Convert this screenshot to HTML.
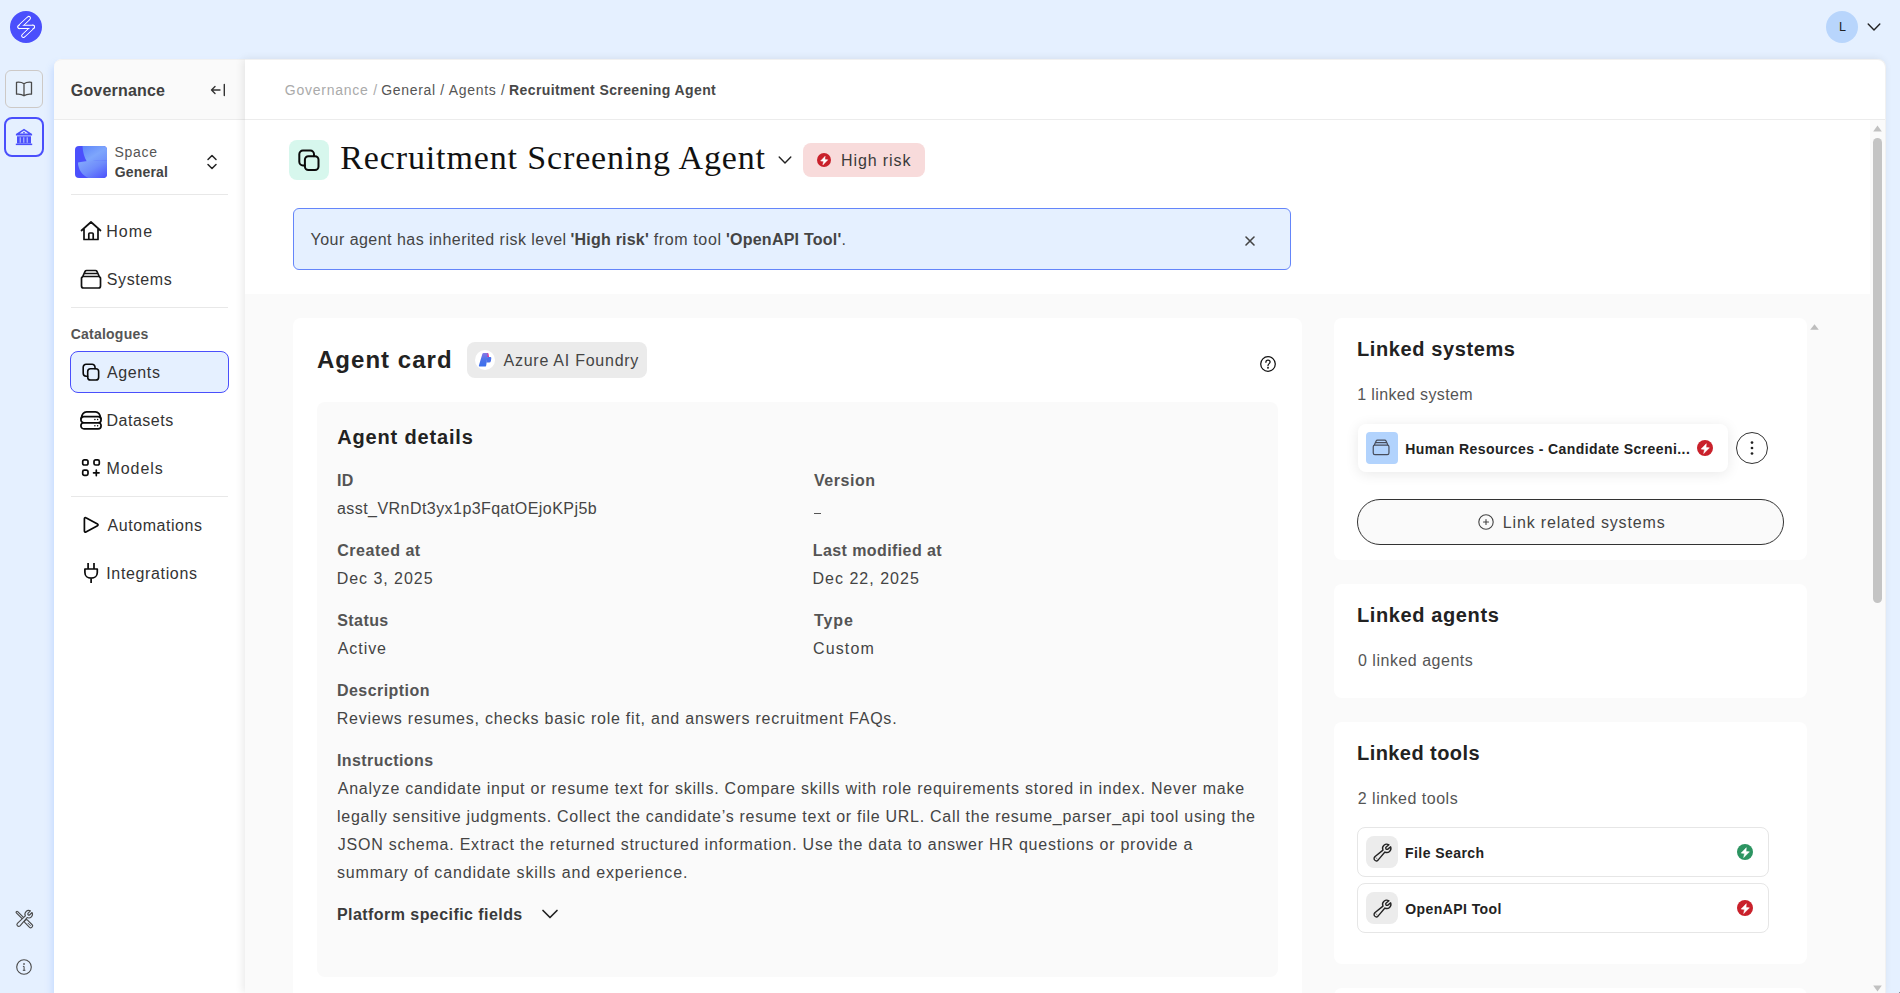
<!DOCTYPE html>
<html lang="en">
<head>
<meta charset="utf-8">
<title>Recruitment Screening Agent</title>
<style>
*{box-sizing:border-box;margin:0;padding:0}
html,body{width:1900px;height:993px;overflow:hidden}
body{background:#e5f0ff;font-family:"Liberation Sans",sans-serif;color:#444;position:relative;font-size:16px}
.a{position:absolute}
.t{position:absolute;white-space:nowrap;line-height:20px;height:20px}
.b{font-weight:bold}
svg{position:absolute;overflow:visible}
/* panels */
#side{left:54px;top:59px;width:191px;height:934px;background:#fff;border-radius:8px 0 0 0;box-shadow:-2px 5px 7px rgba(120,165,255,.28)}
#sidehead{left:0;top:0;width:191px;height:61px;background:#fafafa;border-radius:8px 0 0 0;border-top:1px solid #f1f1f1;border-bottom:1px solid #ececec}
#main{left:245px;top:59px;width:1641px;height:934px;background:#fafafa;border-radius:0 8px 0 0;box-shadow:-2px 0 8px rgba(0,0,0,.09);border-top:1px solid #f1f1f1;border-right:1px solid #f1f1f1;overflow:hidden}
#mainhead{left:0;top:0;width:1640px;height:60px;background:#fff;border-bottom:1px solid #ececec;border-radius:0 8px 0 0}
#maintop{left:0;top:60px;width:1625px;height:174px;background:#fff}
.hr{position:absolute;height:1px;background:#e8e8e8}
.lbl{color:#545454}
.val{color:#444}
.card{position:absolute;background:#fff;border-radius:8px}
</style>
</head>
<body>

<!-- far-left rail -->
<div class="a" id="logo" style="left:10px;top:11px;width:32px;height:32px;border-radius:50%;background:#4a4ffc"></div>
<div class="a" id="rb1" style="left:5px;top:70px;width:38px;height:38px;border:1px solid #cdc9c6;border-radius:6px;background:#e7f1fd"></div>
<div class="a" id="rb2" style="left:4px;top:117px;width:40px;height:40px;border:2px solid #4a4ffc;border-radius:8px;background:#e5f0ff"></div>

<!-- avatar -->
<div class="a" style="left:1826px;top:11px;width:32px;height:32px;border-radius:50%;background:#b8d5fc"></div>
<div class="t" id="av" style="left:1826.5px;top:17px;width:32px;text-align:center;font-size:12.5px;color:#222">L</div>

<!-- sidebar -->
<div class="a" id="side">
  <div class="a" id="sidehead"></div>
</div>

<!-- main -->
<div class="a" id="main">
  <div class="a" id="mainhead"></div>
  <div class="a" id="maintop"></div>
</div>


<!-- ===== sidebar content (page coords) ===== -->
<div class="t b" id="gov" style="left:70.75px;letter-spacing:0.191px;top:81px;color:#404040">Governance</div>
<svg id="collapse" style="left:210px;top:82px" width="16" height="16" viewBox="0 0 16 16" fill="none" stroke="#333" stroke-width="1.4" stroke-linecap="round" stroke-linejoin="round"><path d="M10 8H1.5M5 4.5L1.5 8L5 11.5M14.3 2.5v11"/></svg>

<div class="a" id="spaceico" style="left:75px;top:146px;width:32px;height:32px;border-radius:4px;background:#4b50fc;overflow:hidden">
  <svg style="left:0;top:0" width="32" height="32" viewBox="0 0 32 32"><defs><linearGradient id="sg1" x1="0" y1="0" x2="1" y2="1"><stop offset="0" stop-color="#5f86fb"/><stop offset=".55" stop-color="#7ea6fc"/><stop offset="1" stop-color="#6f8efb"/></linearGradient><linearGradient id="sg2" x1="0" y1="0" x2="1" y2="1"><stop offset="0" stop-color="#86adfc"/><stop offset=".5" stop-color="#6f8cfb"/><stop offset="1" stop-color="#4b50fc"/></linearGradient></defs><path d="M7.5 0H32V14.2C23 14.3 15 14.8 11.8 15.6C9.3 11.5 7.8 6 7.5 0Z" fill="url(#sg1)"/><path d="M3 16.4C10 14.8 21 14.2 32 14.2V32H13.5C7.5 29.5 3 23.5 3 16.4Z" fill="url(#sg2)"/></svg>
</div>
<div class="t" id="sp1" style="left:114.5px;letter-spacing:0.686px;top:142px;font-size:14px;color:#555">Space</div>
<div class="t b" id="sp2" style="left:114.75px;letter-spacing:0.177px;top:162px;font-size:14px;color:#444">General</div>
<svg id="updown" style="left:206px;top:153px" width="12" height="18" viewBox="0 0 12 18" fill="none" stroke="#222" stroke-width="1.5" stroke-linecap="round" stroke-linejoin="round"><path d="M2 6.5L6 2.5L10 6.5M2 11.5L6 15.5L10 11.5"/></svg>
<div class="hr" style="left:71px;top:194px;width:157px"></div>

<!-- nav -->
<svg class="ni" style="left:80px;top:220px" width="22" height="22" viewBox="0 0 22 22" fill="none" stroke="#111" stroke-width="1.7" stroke-linecap="round" stroke-linejoin="round"><path d="M1.5 10.5L11 2L20.5 10.5M4 8.5V19.5H18V8.5M8.8 19.5V14C8.8 13.4 9.2 13 9.8 13H12.2C12.8 13 13.2 13.4 13.2 14V19.5"/></svg>
<div class="t" id="n1" style="left:106.25px;letter-spacing:1.059px;top:222px;color:#333">Home</div>

<svg class="ni" style="left:80px;top:268px" width="22" height="22" viewBox="0 0 22 22" fill="none" stroke="#111" stroke-width="1.7" stroke-linecap="round" stroke-linejoin="round"><path d="M1.5 10.5C1.5 9.4 2.4 8.5 3.5 8.5H18.5C19.6 8.5 20.5 9.4 20.5 10.5V18C20.5 19.1 19.6 20 18.5 20H3.5C2.4 20 1.5 19.1 1.5 18ZM2.5 9L5 3.5C5.3 2.9 5.9 2.5 6.6 2.5H15.4C16.1 2.5 16.7 2.9 17 3.5L19.5 9M4.2 5.5H17.8"/></svg>
<div class="t" id="n2" style="left:106.75px;letter-spacing:0.614px;top:270px;color:#333">Systems</div>

<div class="hr" style="left:71px;top:307px;width:157px"></div>
<div class="t b" id="cat" style="left:70.75px;letter-spacing:0.220px;top:324px;font-size:14px;color:#555">Catalogues</div>

<div class="a" id="agbtn" style="left:70px;top:351px;width:159px;height:42px;border:1px solid #4a4ffc;border-radius:8px;background:#e5f0ff"></div>
<svg class="ni" style="left:82px;top:363px" width="18" height="18.5" viewBox="0 0 22 23" fill="none" stroke="#0a0a0a" stroke-width="2" stroke-linecap="round" stroke-linejoin="round"><path d="M16 7.2V5.2A3.6 3.6 0 0 0 12.4 1.6H4.9A3.6 3.6 0 0 0 1.3 5.2V12.8A3.6 3.6 0 0 0 4.9 16.4H6.9"/><rect x="6.9" y="7.2" width="13.6" height="13.9" rx="3.5"/></svg>
<div class="t" id="n3" style="left:107px;letter-spacing:0.620px;top:363px;color:#333">Agents</div>

<svg class="ni" style="left:80px;top:410px" width="22" height="20" viewBox="0 0 22 20" fill="none" stroke="#0a0a0a" stroke-width="1.7" stroke-linecap="round" stroke-linejoin="round"><path d="M1.2 8.6C1.7 4.8 3.6 1.8 6.6 1.8H15.4C18.4 1.8 20.3 4.8 20.8 8.6"/><rect x=".9" y="6.6" width="20.2" height="6.15" rx="3.07"/><rect x=".9" y="12.75" width="20.2" height="6.15" rx="3.07"/><path d="M14.9 9.5V9.6M17.6 9.5V9.6M14.9 15.7V15.8M17.6 15.7V15.8" stroke-width="1.5"/></svg>
<div class="t" id="n4" style="left:106.5px;letter-spacing:0.514px;top:411px;color:#333">Datasets</div>

<svg class="ni" style="left:81px;top:458px" width="20" height="20" viewBox="0 0 20 20" fill="none" stroke="#0a0a0a" stroke-width="1.7" stroke-linecap="round" stroke-linejoin="round"><rect x="1.7" y="1.8" width="5.3" height="5.2" rx="1.6"/><rect x="13" y="1.8" width="5.3" height="5.2" rx="1.6"/><rect x="1.7" y="12.2" width="5.3" height="5.2" rx="1.6"/><path d="M15.3 12.05V17.55M12.55 14.8H18.05"/></svg>
<div class="t" id="n5" style="left:106.5px;letter-spacing:0.941px;top:459px;color:#333">Models</div>

<div class="hr" style="left:71px;top:496px;width:157px"></div>

<svg class="ni" style="left:80px;top:514px" width="22" height="22" viewBox="0 0 22 22" fill="none" stroke="#0a0a0a" stroke-width="1.7" stroke-linecap="round" stroke-linejoin="round"><path d="M4.4 4.7C4.4 3.9 5.2 3.4 5.9 3.8L17.5 10C18.2 10.4 18.2 11.3 17.5 11.7L5.9 18C5.2 18.4 4.4 17.9 4.4 17.1Z"/></svg>
<div class="t" id="n6" style="left:107.5px;letter-spacing:0.553px;top:516px;color:#333">Automations</div>

<svg class="ni" style="left:80px;top:562px" width="22" height="22" viewBox="0 0 22 22" fill="none" stroke="#0a0a0a" stroke-width="1.7" stroke-linecap="round" stroke-linejoin="round"><path d="M8.1 .9V7M14 .9V7M4.9 7H17.3V10.5C17.3 13.9 14.5 16.2 11.1 16.2C7.7 16.2 4.9 13.9 4.9 10.5ZM11.1 16.2V20.9" stroke-linecap="butt"/></svg>
<div class="t" id="n7" style="left:106.25px;letter-spacing:0.645px;top:564px;color:#333">Integrations</div>

<!-- bottom rail icons -->
<svg id="toolsico" style="left:14px;top:909px" width="20" height="20" viewBox="0 0 20 20" fill="none" stroke="#4a4a4a" stroke-width="1.15" stroke-linecap="round" stroke-linejoin="round"><g transform="translate(11,11.2) rotate(-45)"><rect x="-.95" y="-12.2" width="1.9" height="11.4" rx=".95"/><rect x="-1.85" y=".2" width="3.7" height="9.6" rx="1.5" fill="#e5f0ff"/><path d="M0 4.2V7.6" stroke-width=".9"/></g><path d="M16.41 1.86A3.75 3.75 0 0 0 11.37 6.93L3.37 14.32A1.85 1.85 0 0 0 6.03 16.88L13.10 8.59A3.75 3.75 0 0 0 18.04 3.49L15.76 5.77A1.15 1.15 0 0 1 14.13 4.14Z" fill="#e5f0ff"/></svg>
<svg id="infoico" style="left:16px;top:959px" width="16" height="16" viewBox="0 0 16 16" fill="none" stroke="#4a4a4a" stroke-width="1.1" stroke-linecap="round"><circle cx="8" cy="8" r="7.3"/><path d="M7.3 7.4H8.1V11.2M7.2 11.3H9" stroke-width="1"/><circle cx="7.9" cy="5" r=".45" fill="#4a4a4a" stroke-width=".7"/></svg>


<!-- ===== rail icons ===== -->
<svg id="logomark" style="left:10px;top:11px" width="32" height="32" viewBox="0 0 32 32" fill="none" stroke-linecap="round" stroke-linejoin="round"><g stroke="#fff" stroke-width="4.3"><path d="M18.8 7.1L9.5 15.9"/></g><g stroke="#4a4ffc" stroke-width="2.3"><path d="M18.8 7.1L9.5 15.9"/></g><g stroke="#fff" stroke-width="4.3"><path d="M22.9 15.9L13.3 24.8"/></g><g stroke="#4a4ffc" stroke-width="2.3"><path d="M22.9 15.9L13.3 24.8"/></g><g stroke="#fff" stroke-width="4.3"><path d="M9.5 15.9H22.9"/></g><g stroke="#4a4ffc" stroke-width="2.3"><path d="M9.5 15.9H22.9"/></g><g stroke="#4a4ffc" stroke-width="2.3"><path d="M17.5 8.3L10.8 14.7M21.6 17.1L14.6 23.6"/></g></svg>
<svg id="bookico" style="left:15px;top:81px" width="18" height="16" viewBox="0 0 18 16" fill="none" stroke="#4a4a4a" stroke-width="1.3" stroke-linecap="round" stroke-linejoin="round"><path d="M9 2.8C7 1.3 4 1 1.5 1.3V13.2C4 12.9 7 13.3 9 14.8C11 13.3 14 12.9 16.5 13.2V1.3C14 1 11 1.3 9 2.8ZM9 2.8V14.8"/></svg>
<svg id="bankico" style="left:15px;top:128px" width="18" height="18" viewBox="0 0 18 18" fill="#4a4ffc"><path d="M9 .7L17.1 6V7.4H.9V6ZM9 2.5L4.6 5.6H13.4Z" fill-rule="evenodd"/><circle cx="9" cy="4.7" r=".85"/><rect x="2" y="8.3" width="14" height="7.2"/><g fill="#e5f0ff" opacity=".62"><rect x="4.6" y="9.3" width="1.3" height="5.4"/><rect x="8.1" y="9.3" width="1.3" height="5.4"/><rect x="11.6" y="9.3" width="1.3" height="5.4"/></g><rect x=".8" y="15.6" width="16.4" height="1.5"/></svg>
<svg id="avchev" style="left:1867px;top:21.6px" width="14" height="10" viewBox="0 0 14 10" fill="none" stroke="#222" stroke-width="1.4" stroke-linecap="round" stroke-linejoin="round"><path d="M1.2 2L7 8L12.8 2"/></svg>

<!-- ===== breadcrumb ===== -->
<div class="t" id="bc1" style="left:284.75px;letter-spacing:0.753px;top:80px;font-size:14px;color:#aaa">Governance /</div>
<div class="t" id="bc2" style="left:381.25px;letter-spacing:0.663px;top:80px;font-size:14px;color:#555">General /</div>
<div class="t" id="bc3" style="left:448.75px;letter-spacing:0.674px;top:80px;font-size:14px;color:#555">Agents /</div>
<div class="t b" id="bc4" style="left:509px;letter-spacing:0.402px;top:80px;font-size:14px;color:#484848">Recruitment Screening Agent</div>

<!-- ===== title row ===== -->
<div class="a" id="ticobox" style="left:289px;top:140px;width:40px;height:40px;border-radius:8px;background:#d7f7ed"></div>
<svg id="tico" style="left:298px;top:148.5px" width="22" height="23" viewBox="0 0 22 23" fill="none" stroke="#0a0a0a" stroke-width="2" stroke-linecap="round" stroke-linejoin="round"><path d="M16 7.2V5.2A3.6 3.6 0 0 0 12.4 1.6H4.9A3.6 3.6 0 0 0 1.3 5.2V12.8A3.6 3.6 0 0 0 4.9 16.4H6.9"/><rect x="6.9" y="7.2" width="13.6" height="13.9" rx="3.5"/></svg>
<div class="t" id="title" style="left:340.25px;letter-spacing:0.868px;top:136px;height:44px;line-height:44px;font-family:'Liberation Serif',serif;font-size:34px;color:#111">Recruitment Screening Agent</div>
<svg id="tchev" style="left:778px;top:155px" width="14" height="10" viewBox="0 0 14 10" fill="none" stroke="#222" stroke-width="1.4" stroke-linecap="round" stroke-linejoin="round"><path d="M1.2 2L7 8L12.8 2"/></svg>
<div class="a" id="riskbadge" style="left:803px;top:143px;width:122px;height:34px;border-radius:8px;background:#f8dbdb"></div>
<svg class="bolt" style="left:817px;top:153px" width="14" height="14" viewBox="0 0 16 16"><circle cx="8" cy="8" r="8" fill="#c9212b"/><path d="M9.3 3.7L4.1 9.1L7.5 9.4L6.7 13.6L12.4 7.8L9 7.4Z" fill="#fff" stroke="#fff" stroke-width=".5" stroke-linejoin="round"/></svg>
<div class="t" id="risk" style="left:841px;letter-spacing:0.894px;top:151px;color:#3a3a3a">High risk</div>

<!-- ===== alert ===== -->
<div class="a" id="alert" style="left:293px;top:208px;width:998px;height:62px;border:1px solid #6485fa;border-radius:6px;background:#e5f0ff"></div>
<div class="t" id="al1" style="left:310.5px;letter-spacing:0.472px;top:230px;color:#444">Your agent has inherited risk level</div>
<div class="t b" id="al2" style="left:570.5px;letter-spacing:0.223px;top:230px;color:#444">'High risk'</div>
<div class="t" id="al3" style="left:653.75px;letter-spacing:0.620px;top:230px;color:#444">from tool</div>
<div class="t" id="al4" style="left:726px;letter-spacing:0.238px;top:230px;color:#444"><b>'OpenAPI Tool'</b>.</div>
<svg id="alertx" style="left:1245px;top:236px" width="10" height="10" viewBox="0 0 10 10" fill="none" stroke="#444" stroke-width="1.6" stroke-linecap="round"><path d="M1 1L9 9M9 1L1 9"/></svg>

<!-- ===== scrollbars ===== -->
<div class="a" id="sbtrack" style="left:1870px;top:120px;width:15px;height:873px;background:#fafafa"></div>
<svg style="left:1873px;top:125px" width="9" height="7" viewBox="0 0 9 7"><path d="M4.5 .6L8.8 6.4H.2Z" fill="#c1c1c1"/></svg>
<div class="a" id="sbthumb" style="left:1873px;top:138px;width:9px;height:465px;border-radius:4.5px;background:#c4c4c4"></div>
<svg style="left:1873px;top:985px" width="9" height="7" viewBox="0 0 9 7"><path d="M4.5 6.4L8.8 .6H.2Z" fill="#c1c1c1"/></svg>
<svg style="left:1810px;top:324px" width="9" height="6" viewBox="0 0 9 6"><path d="M4.5 .3L8.8 5.8H.2Z" fill="#bdbdbd"/></svg>


<!-- ===== Agent card ===== -->
<div class="card" id="agentcard" style="left:293px;top:318px;width:1009px;height:700px"></div>
<div class="t b" id="h_ac" style="left:317px;letter-spacing:1.020px;top:344px;height:32px;line-height:32px;font-size:24px;color:#222">Agent card</div>
<div class="a" id="azbadge" style="left:467px;top:342px;width:180px;height:36px;border-radius:8px;background:#ebebeb"></div>
<div class="a" style="left:475px;top:350px;width:20px;height:20px;border-radius:50%;background:#fff"></div>
<svg id="azico" style="left:475px;top:350px" width="20" height="20" viewBox="0 0 20 20"><defs><linearGradient id="azg" x1="0" y1="0" x2="0" y2="1"><stop offset="0" stop-color="#8a78e6"/><stop offset=".45" stop-color="#4f74ea"/><stop offset="1" stop-color="#3a6fec"/></linearGradient></defs><path d="M11 3H12.6Q13.4 3 13.5 3.8L14 7H11.5Z" fill="#dc2f93"/><path d="M12.2 7H15.2Q16.5 7 16.3 8.3L15.9 11Q15.6 12.6 14.1 12.6H11.3Z" fill="#4c71e8"/><path d="M8.6 2.9H11.6Q12.9 2.9 12.7 4.2L11.2 15.4Q11 16.6 9.8 16.6H4.6Q3.5 16.6 3.9 15.5L7.4 3.8Q7.7 2.9 8.6 2.9Z" fill="url(#azg)"/></svg>
<div class="t" id="aztx" style="left:503.5px;letter-spacing:0.750px;top:351px;color:#444">Azure AI Foundry</div>
<svg id="helpico" style="left:1260px;top:356px" width="16" height="16" viewBox="0 0 16 16" fill="none" stroke="#111" stroke-width="1.25" stroke-linecap="round" stroke-linejoin="round"><circle cx="8" cy="8" r="7.3"/><path d="M5.9 6.3C5.9 5.1 6.8 4.2 8 4.2C9.2 4.2 10.1 5 10.1 6.1C10.1 7.6 8 7.7 8 9.5"/><circle cx="8" cy="11.8" r=".35" fill="#111"/></svg>

<div class="a" id="detpanel" style="left:317px;top:402px;width:961px;height:575px;border-radius:8px;background:#fafafa"></div>
<div class="t b" id="h_ad" style="left:337.25px;letter-spacing:0.832px;top:424px;height:26px;line-height:26px;font-size:20px;color:#222">Agent details</div>

<div class="t b lbl" id="l1" style="left:337px;letter-spacing:0.378px;top:471px">ID</div>
<div class="t val" id="v1" style="left:337px;letter-spacing:0.444px;top:499px">asst_VRnDt3yx1p3FqatOEjoKPj5b</div>
<div class="t b lbl" id="l2" style="left:814px;letter-spacing:0.542px;top:471px">Version</div>
<div class="a" id="v2" style="left:814px;top:513px;width:7px;height:1.4px;background:#555"></div>

<div class="t b lbl" id="l3" style="left:337.25px;letter-spacing:0.518px;top:541px">Created at</div>
<div class="t val" id="v3" style="left:336.75px;letter-spacing:0.953px;top:569px">Dec 3, 2025</div>
<div class="t b lbl" id="l4" style="left:812.75px;letter-spacing:0.408px;top:541px">Last modified at</div>
<div class="t val" id="v4" style="left:812.5px;letter-spacing:1.015px;top:569px">Dec 22, 2025</div>

<div class="t b lbl" id="l5" style="left:337.25px;letter-spacing:0.424px;top:611px">Status</div>
<div class="t val" id="v5" style="left:337.75px;letter-spacing:0.934px;top:639px">Active</div>
<div class="t b lbl" id="l6" style="left:814px;letter-spacing:0.879px;top:611px">Type</div>
<div class="t val" id="v6" style="left:813px;letter-spacing:1.140px;top:639px">Custom</div>

<div class="t b lbl" id="l7" style="left:337px;letter-spacing:0.439px;top:681px">Description</div>
<div class="t val" id="v7" style="left:336.75px;letter-spacing:0.766px;top:709px">Reviews resumes, checks basic role fit, and answers recruitment FAQs.</div>

<div class="t b lbl" id="l8" style="left:337px;letter-spacing:0.411px;top:751px">Instructions</div>
<div class="t val" id="i1" style="left:337.75px;letter-spacing:0.767px;top:779px">Analyze candidate input or resume text for skills. Compare skills with role requirements stored in index. Never make</div>
<div class="t val" id="i2" style="left:337px;letter-spacing:0.720px;top:807px">legally sensitive judgments. Collect the candidate’s resume text or file URL. Call the resume_parser_api tool using the</div>
<div class="t val" id="i3" style="left:337.75px;letter-spacing:0.762px;top:835px">JSON schema. Extract the returned structured information. Use the data to answer HR questions or provide a</div>
<div class="t val" id="i4" style="left:337px;letter-spacing:0.846px;top:863px">summary of candidate skills and experience.</div>

<div class="t b lbl" id="l9" style="left:337px;letter-spacing:0.439px;top:905px;color:#3a3a3a">Platform specific fields</div>
<svg id="pchev" style="left:541px;top:908px" width="18" height="12" viewBox="0 0 18 12" fill="none" stroke="#222" stroke-width="1.7" stroke-linecap="round" stroke-linejoin="round"><path d="M2 2.5L9 9.5L16 2.5"/></svg>

<!-- ===== Linked systems ===== -->
<div class="card" id="c_ls" style="left:1334px;top:318px;width:473px;height:242px;border-radius:8px"></div>
<div class="t b h20" id="h_ls" style="left:1357px;letter-spacing:0.606px;top:336px;height:26px;line-height:26px;font-size:20px;color:#222">Linked systems</div>
<div class="t" id="s_ls" style="left:1357.25px;letter-spacing:0.358px;top:385px;color:#555">1 linked system</div>
<div class="a" id="sysitem" style="left:1358px;top:424px;width:370px;height:48px;border-radius:8px;background:#fff;box-shadow:0 2px 14px rgba(0,0,0,.09)"></div>
<div class="a" style="left:1366px;top:432px;width:32px;height:32px;border-radius:4px;background:#b2d3fd"></div>
<svg style="left:1372.2px;top:438px" width="18.2" height="18.2" viewBox="0 0 22 22" fill="none" stroke="#474d5c" stroke-width="1.45" stroke-linecap="round" stroke-linejoin="round"><path d="M1.5 10.5C1.5 9.4 2.4 8.5 3.5 8.5H18.5C19.6 8.5 20.5 9.4 20.5 10.5V18C20.5 19.1 19.6 20 18.5 20H3.5C2.4 20 1.5 19.1 1.5 18ZM2.5 9L5 3.5C5.3 2.9 5.9 2.5 6.6 2.5H15.4C16.1 2.5 16.7 2.9 17 3.5L19.5 9M4.2 5.5H17.8"/></svg>
<div class="t b" id="systx" style="left:1405.25px;letter-spacing:0.415px;top:439px;font-size:14px;color:#222">Human Resources - Candidate Screeni...</div>
<svg class="bolt" style="left:1697px;top:440px" width="16" height="16" viewBox="0 0 16 16"><circle cx="8" cy="8" r="8" fill="#c9212b"/><path d="M9.3 3.7L4.1 9.1L7.5 9.4L6.7 13.6L12.4 7.8L9 7.4Z" fill="#fff" stroke="#fff" stroke-width=".5" stroke-linejoin="round"/></svg>
<div class="a" id="kebab" style="left:1736px;top:432px;width:32px;height:32px;border-radius:50%;border:1px solid #333;background:#fff"></div>
<svg style="left:1750px;top:440px" width="4" height="16" viewBox="0 0 4 16" fill="#222"><circle cx="2" cy="2.6" r="1.35"/><circle cx="2" cy="8" r="1.35"/><circle cx="2" cy="13.5" r="1.35"/></svg>
<div class="a" id="linkbtn" style="left:1357px;top:499px;width:427px;height:46px;border-radius:23px;border:1px solid #333;background:#fafafa"></div>
<svg id="plusico" style="left:1478px;top:514px" width="16" height="16" viewBox="0 0 16 16" fill="none" stroke="#444" stroke-width="1.1" stroke-linecap="round"><circle cx="8" cy="8" r="7.2"/><path d="M8 5.5V10.5M5.5 8H10.5"/></svg>
<div class="t" id="linktx" style="left:1502.75px;letter-spacing:0.847px;top:513px;color:#444">Link related systems</div>

<!-- ===== Linked agents ===== -->
<div class="card" id="c_la" style="left:1334px;top:584px;width:473px;height:114px;border-radius:8px"></div>
<div class="t b h20" id="h_la" style="left:1357px;letter-spacing:0.610px;top:602px;height:26px;line-height:26px;font-size:20px;color:#222">Linked agents</div>
<div class="t" id="s_la" style="left:1358px;letter-spacing:0.513px;top:651px;color:#555">0 linked agents</div>

<!-- ===== Linked tools ===== -->
<div class="card" id="c_lt" style="left:1334px;top:722px;width:473px;height:242px;border-radius:8px"></div>
<div class="t b h20" id="h_lt" style="left:1357px;letter-spacing:0.437px;top:740px;height:26px;line-height:26px;font-size:20px;color:#222">Linked tools</div>
<div class="t" id="s_lt" style="left:1357.75px;letter-spacing:0.502px;top:789px;color:#555">2 linked tools</div>

<div class="a tool" style="left:1357px;top:827px;width:412px;height:50px;border:1px solid #e6e6e6;border-radius:8px;background:#fff"></div>
<div class="a" style="left:1366px;top:836px;width:32px;height:32px;border-radius:8px;background:#ececec"></div>
<svg class="wr" style="left:1373.5px;top:843.5px" width="17" height="17" viewBox="0 0 18 18" fill="none" stroke="#222" stroke-width="1.45" stroke-linecap="round" stroke-linejoin="round"><path d="M15.80 0.85A4.4 4.4 0 0 0 9.52 6.48L0.83 13.60A2.45 2.45 0 0 0 4.27 17.10L11.55 8.54A4.4 4.4 0 0 0 17.60 2.99L14.71 5.42A1.4 1.4 0 0 1 12.91 3.27Z"/><path d="M1.9 14.3L3.6 16.2" stroke-width="1" opacity=".55"/></svg>
<div class="t b" id="tool1" style="left:1405px;letter-spacing:0.438px;top:843px;font-size:14px;color:#222">File Search</div>
<svg class="bolt" style="left:1737px;top:844px" width="16" height="16" viewBox="0 0 16 16"><circle cx="8" cy="8" r="8" fill="#2c9461"/><path d="M9.3 3.7L4.1 9.1L7.5 9.4L6.7 13.6L12.4 7.8L9 7.4Z" fill="#fff" stroke="#fff" stroke-width=".5" stroke-linejoin="round"/></svg>

<div class="a tool" style="left:1357px;top:883px;width:412px;height:50px;border:1px solid #e6e6e6;border-radius:8px;background:#fff"></div>
<div class="a" style="left:1366px;top:892px;width:32px;height:32px;border-radius:8px;background:#ececec"></div>
<svg class="wr" style="left:1373.5px;top:899.5px" width="17" height="17" viewBox="0 0 18 18" fill="none" stroke="#222" stroke-width="1.45" stroke-linecap="round" stroke-linejoin="round"><path d="M15.80 0.85A4.4 4.4 0 0 0 9.52 6.48L0.83 13.60A2.45 2.45 0 0 0 4.27 17.10L11.55 8.54A4.4 4.4 0 0 0 17.60 2.99L14.71 5.42A1.4 1.4 0 0 1 12.91 3.27Z"/><path d="M1.9 14.3L3.6 16.2" stroke-width="1" opacity=".55"/></svg>
<div class="t b" id="tool2" style="left:1405.25px;letter-spacing:0.428px;top:899px;font-size:14px;color:#222">OpenAPI Tool</div>
<svg class="bolt" style="left:1737px;top:900px" width="16" height="16" viewBox="0 0 16 16"><circle cx="8" cy="8" r="8" fill="#c9212b"/><path d="M9.3 3.7L4.1 9.1L7.5 9.4L6.7 13.6L12.4 7.8L9 7.4Z" fill="#fff" stroke="#fff" stroke-width=".5" stroke-linejoin="round"/></svg>

<!-- next card peeking -->
<div class="card" id="c_next" style="left:1334px;top:988px;width:473px;height:40px;border-radius:8px"></div>

<div class="a" style="left:1899px;top:992px;width:1px;height:1px;background:#8a8c98"></div>
</body>
</html>
